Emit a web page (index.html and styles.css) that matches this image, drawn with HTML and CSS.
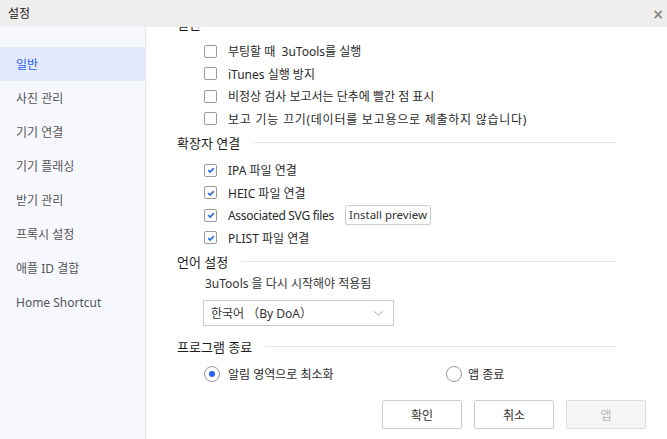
FILE: index.html
```html
<!DOCTYPE html>
<html lang="ko">
<head>
<meta charset="utf-8">
<title>설정</title>
<link rel="stylesheet" href="styles.css">
</head>
<body>
<div class="window">
  <div class="titlebar">
    <span class="title">설정</span>
    <span class="close">×</span>
  </div>
  <div class="main">
    <nav class="sidebar">
      <div class="nav-item active">일반</div>
      <div class="nav-item">사진 관리</div>
      <div class="nav-item">기기 연결</div>
      <div class="nav-item">기기 플래싱</div>
      <div class="nav-item">받기 관리</div>
      <div class="nav-item">프록시 설정</div>
      <div class="nav-item">애플 ID 결합</div>
      <div class="nav-item">Home Shortcut</div>
    </nav>
    <div class="content">
      <div class="scroll">
        <div class="section-head"><span>일반</span><i class="rule"></i></div>
        <div class="opts">
          <label class="row"><span class="cb"></span>부팅할 때&nbsp; 3uTools를 실행</label>
          <label class="row"><span class="cb"></span>iTunes 실행 방지</label>
          <label class="row"><span class="cb"></span>비정상 검사 보고서는 단추에 빨간 점 표시</label>
          <label class="row wide"><span class="cb"></span>보고 기능 끄기(데이터를 보고용으로 제출하지 않습니다)</label>
        </div>

        <div class="section-head"><span>확장자 연결</span><i class="rule"></i></div>
        <div class="opts">
          <label class="row"><span class="cb on"><svg viewBox="0 0 10 10"><path d="M2.2 5.2 L4.2 7 L7.8 3.2" /></svg></span>IPA 파일 연결</label>
          <label class="row"><span class="cb on"><svg viewBox="0 0 10 10"><path d="M2.2 5.2 L4.2 7 L7.8 3.2" /></svg></span>HEIC 파일 연결</label>
          <label class="row"><span class="cb on"><svg viewBox="0 0 10 10"><path d="M2.2 5.2 L4.2 7 L7.8 3.2" /></svg></span><span class="tight">Associated SVG files</span><button class="small-btn">Install preview</button></label>
          <label class="row"><span class="cb on"><svg viewBox="0 0 10 10"><path d="M2.2 5.2 L4.2 7 L7.8 3.2" /></svg></span>PLIST 파일 연결</label>
        </div>

        <div class="section-head"><span>언어 설정</span><i class="rule"></i></div>
        <div class="note">3uTools 을 다시 시작해야 적용됨</div>
        <div class="select">
          <span>한국어 （By DoA）</span>
          <svg class="chev" viewBox="0 0 12 8"><path d="M1 1.5 L6 6 L11 1.5" /></svg>
        </div>

        <div class="section-head sh-exit"><span>프로그램 종료</span><i class="rule"></i></div>
        <div class="radios">
          <label class="radio-opt"><span class="radio on"></span>알림 영역으로 최소화</label>
          <label class="radio-opt second"><span class="radio"></span>앱 종료</label>
        </div>

        <div class="actions">
          <button class="btn">확인</button>
          <button class="btn">취소</button>
          <button class="btn disabled">앱</button>
        </div>
      </div>
    </div>
  </div>
</div>
</body>
</html>
```

FILE: styles.css
```css
* { box-sizing: border-box; }

html, body {
  margin: 0;
  padding: 0;
}

body {
  width: 667px;
  height: 439px;
  overflow: hidden;
  background: #ffffff;
  font-family: "Noto Sans", "Noto Sans CJK KR", sans-serif;
  color: #333333;
}

.window {
  display: flex;
  flex-direction: column;
  width: 667px;
  height: 439px;
}

.titlebar {
  height: 27px;
  flex: 0 0 27px;
  background: #eeeeee;
  display: flex;
  align-items: center;
  justify-content: space-between;
  padding: 0 3px 0 8px;
}

.title {
  font-size: 12px;
  color: #222222;
  line-height: 14px;
}

.close {
  font-size: 14px;
  line-height: 14px;
  color: #8a8a8a;
  font-weight: bold;
  font-family: "DejaVu Sans", sans-serif;
}

.main {
  flex: 1;
  display: flex;
  min-height: 0;
}

.sidebar {
  width: 146px;
  flex: 0 0 146px;
  background: #f7f8fd;
  border-right: 1px solid #e4e6ec;
  padding-top: 20px;
}

.nav-item {
  height: 34px;
  line-height: 35px;
  padding-left: 16px;
  font-size: 12px;
  color: #555555;
}

.nav-item.active {
  background: #e4eafe;
  color: #1f5cf5;
}

.content {
  flex: 1;
  overflow: hidden;
  min-width: 0;
}

.scroll {
  margin-top: -16px;
  padding: 0 21px 0 31px;
}

.section-head {
  height: 24px;
  display: flex;
  align-items: center;
  font-size: 13px;
  color: #1c1c1c;
  margin-right: 30px;
}

.section-head .rule {
  flex: 1;
  height: 1px;
  background: #e8e8e8;
  margin-left: 13px;
}

.opts {
  padding-top: 5px;
  padding-left: 27px;
}

.row {
  height: 22.5px;
  display: flex;
  align-items: center;
  font-size: 12px;
  color: #2a2a2a;
}

.row.wide {
  letter-spacing: 0.75px;
}

.tight {
  letter-spacing: -0.3px;
}

.cb {
  width: 13px;
  height: 13px;
  border: 1px solid #9a9a9a;
  border-radius: 2px;
  margin-right: 11px;
  background: #ffffff;
  display: flex;
  align-items: center;
  justify-content: center;
}

.cb svg {
  width: 10px;
  height: 10px;
}

.cb svg path {
  fill: none;
  stroke: #2f6fe0;
  stroke-width: 1.8;
}

.small-btn {
  margin-left: 11px;
  height: 20px;
  padding: 0 3px;
  border: 1px solid #cccccc;
  border-radius: 2px;
  background: #ffffff;
  font-family: "Noto Sans", "Noto Sans CJK KR", sans-serif;
  font-size: 11.5px;
  color: #333333;
  line-height: 18px;
}

.note {
  height: 22px;
  line-height: 22px;
  font-size: 12px;
  color: #333333;
  padding-left: 28px;
}

.select {
  margin-top: 5px;
  margin-left: 26px;
  width: 191px;
  height: 26px;
  border: 1px solid #cccccc;
  display: flex;
  align-items: center;
  justify-content: space-between;
  padding: 0 9px 0 7px;
  font-size: 12px;
  color: #333333;
}

.chev {
  width: 11px;
  height: 7px;
}

.chev path {
  fill: none;
  stroke: #9a9a9a;
  stroke-width: 1;
}

.sh-exit {
  margin-top: 8px;
}

.radios {
  margin-top: 5px;
  padding-left: 27px;
  display: flex;
  height: 22px;
  align-items: center;
  font-size: 12px;
  color: #2a2a2a;
}

.radio-opt {
  display: flex;
  align-items: center;
  width: 242px;
}

.radio-opt.second {
  width: auto;
}

.radio {
  width: 16px;
  height: 16px;
  border: 1px solid #9a9a9a;
  border-radius: 50%;
  margin-right: 8px;
  display: flex;
  align-items: center;
  justify-content: center;
  background: #ffffff;
}

.second .radio {
  margin-right: 6px;
}

.radio.on::after {
  content: "";
  width: 6px;
  height: 6px;
  border-radius: 50%;
  background: #2a5ff0;
}

.actions {
  margin-top: 15px;
  display: flex;
  justify-content: flex-end;
  gap: 12px;
}

.btn {
  width: 80px;
  height: 29px;
  border: 1px solid #cccccc;
  border-radius: 2px;
  background: #ffffff;
  font-family: "Noto Sans", "Noto Sans CJK KR", sans-serif;
  font-size: 12px;
  color: #333333;
}

.btn.disabled {
  background: #f5f5f5;
  border-color: #dddddd;
  color: #b5b5b5;
}
```
